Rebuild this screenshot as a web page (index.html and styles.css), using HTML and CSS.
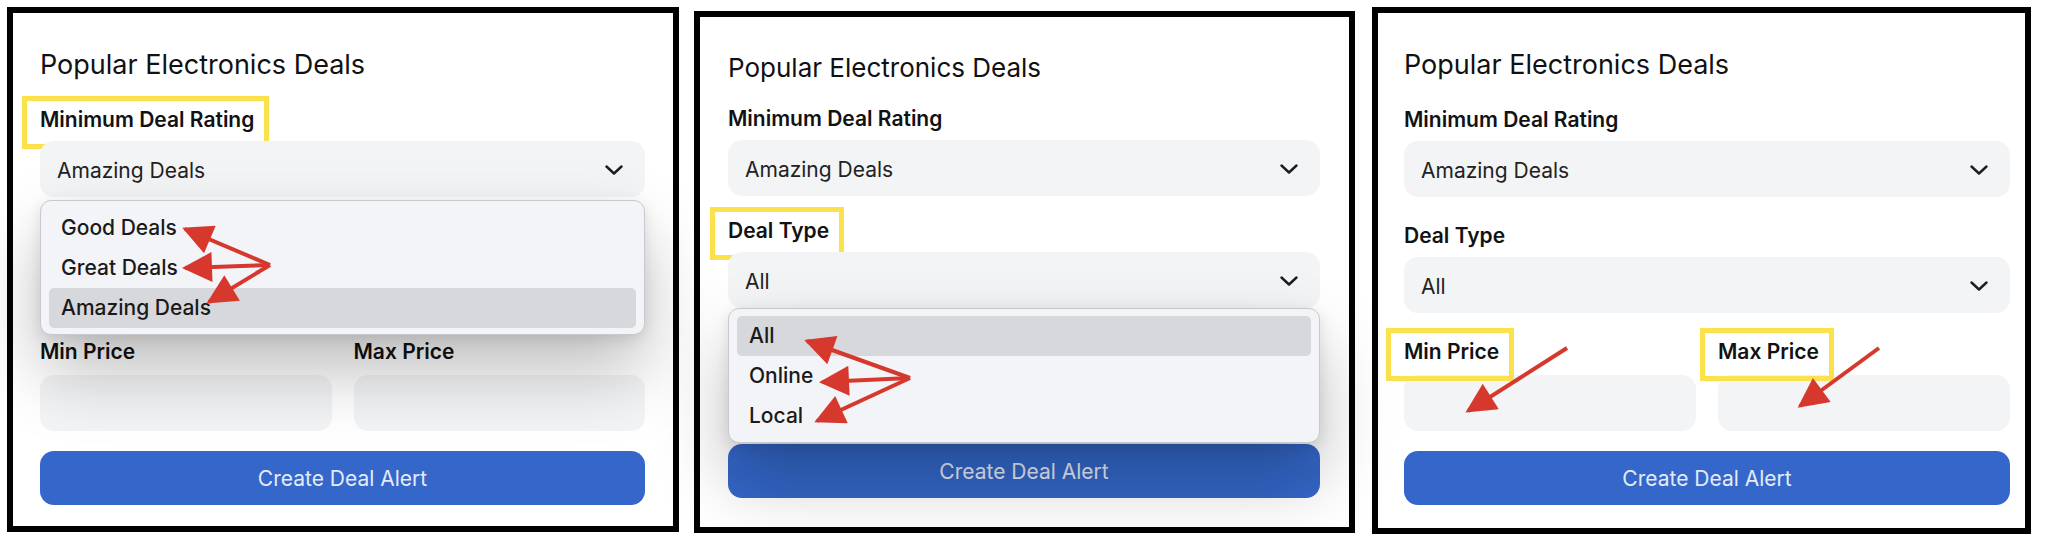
FILE: index.html
```html
<!DOCTYPE html>
<html lang="en">
<head>
  <meta charset="UTF-8">
  <meta name="viewport" content="width=device-width, initial-scale=1.0">
  <title>Deal Alert Filters</title>
  <link rel="stylesheet" href="styles.css">
</head>
<body>
  <svg class="defs" width="0" height="0">
    <defs>
      <marker id="arrowHead" viewBox="0 0 10 10" refX="9" refY="5" markerWidth="32" markerHeight="30" markerUnits="userSpaceOnUse" orient="auto">
        <path d="M0,0 L10,5 L0,10 z" fill="#d6382d"/>
      </marker>
    </defs>
  </svg>

  <div class="board">
    <!-- Step 1: rating dropdown open -->
    <section class="panel panel-one">
      <h2 class="title">Popular Electronics Deals</h2>
      <div class="field">
        <label class="label"><span class="mark">Minimum Deal Rating</span></label>
        <div class="dropdown">
          <div class="select">
            <span>Amazing Deals</span>
            <svg class="chevron" viewBox="0 0 18 10"><path d="M1.5 1.5 L9 8.5 L16.5 1.5"/></svg>
          </div>
          <ul class="menu menu-low">
            <li>Good Deals</li>
            <li>Great Deals</li>
            <li class="active">Amazing Deals</li>
          </ul>
        </div>
      </div>
      <div class="field">
        <label class="label">Deal Type</label>
        <div class="select">
          <span>All</span>
          <svg class="chevron" viewBox="0 0 18 10"><path d="M1.5 1.5 L9 8.5 L16.5 1.5"/></svg>
        </div>
      </div>
      <div class="price-row">
        <div class="price">
          <label class="label">Min Price</label>
          <div class="input"></div>
        </div>
        <div class="price">
          <label class="label">Max Price</label>
          <div class="input"></div>
        </div>
      </div>
      <button class="submit">Create Deal Alert</button>
      <svg class="arrows">
        <line x1="257" y1="252" x2="172" y2="216"/>
        <line x1="257" y1="252" x2="172" y2="255"/>
        <line x1="257" y1="252" x2="196" y2="289"/>
      </svg>
    </section>

    <!-- Step 2: deal type dropdown open -->
    <section class="panel panel-two">
      <h2 class="title">Popular Electronics Deals</h2>
      <div class="field">
        <label class="label">Minimum Deal Rating</label>
        <div class="select">
          <span>Amazing Deals</span>
          <svg class="chevron" viewBox="0 0 18 10"><path d="M1.5 1.5 L9 8.5 L16.5 1.5"/></svg>
        </div>
      </div>
      <div class="field">
        <label class="label"><span class="mark">Deal Type</span></label>
        <div class="dropdown">
          <div class="select">
            <span>All</span>
            <svg class="chevron" viewBox="0 0 18 10"><path d="M1.5 1.5 L9 8.5 L16.5 1.5"/></svg>
          </div>
          <ul class="menu">
            <li class="active">All</li>
            <li>Online</li>
            <li>Local</li>
          </ul>
        </div>
      </div>
      <div class="price-row">
        <div class="price">
          <label class="label">Min Price</label>
          <div class="input"></div>
        </div>
        <div class="price">
          <label class="label">Max Price</label>
          <div class="input"></div>
        </div>
      </div>
      <button class="submit">Create Deal Alert</button>
      <svg class="arrows">
        <line x1="210" y1="361" x2="107" y2="324"/>
        <line x1="210" y1="361" x2="122" y2="365"/>
        <line x1="210" y1="361" x2="117" y2="404"/>
      </svg>
    </section>

    <!-- Step 3: price inputs -->
    <section class="panel panel-three">
      <h2 class="title">Popular Electronics Deals</h2>
      <div class="field">
        <label class="label">Minimum Deal Rating</label>
        <div class="select">
          <span>Amazing Deals</span>
          <svg class="chevron" viewBox="0 0 18 10"><path d="M1.5 1.5 L9 8.5 L16.5 1.5"/></svg>
        </div>
      </div>
      <div class="field">
        <label class="label">Deal Type</label>
        <div class="select">
          <span>All</span>
          <svg class="chevron" viewBox="0 0 18 10"><path d="M1.5 1.5 L9 8.5 L16.5 1.5"/></svg>
        </div>
      </div>
      <div class="price-row">
        <div class="price">
          <label class="label"><span class="mark">Min Price</span></label>
          <div class="input"></div>
        </div>
        <div class="price">
          <label class="label"><span class="mark">Max Price</span></label>
          <div class="input"></div>
        </div>
      </div>
      <button class="submit">Create Deal Alert</button>
      <svg class="arrows">
        <line x1="189" y1="335" x2="90" y2="398"/>
        <line x1="501" y1="335" x2="422" y2="393"/>
      </svg>
    </section>
  </div>
</body>
</html>
```

FILE: styles.css
```css
/* Page */
body {
  margin: 0;
  background-color: #fff;
  font-family: Inter, "Noto Sans", "Liberation Sans", sans-serif;
  color: #141414;
}

.defs {
  position: absolute;
}

.board {
  display: flex;
  align-items: flex-start;
  padding: 7px 0 0 7px;
}

/* Panels */
.panel {
  position: relative;
  box-sizing: border-box;
  display: flex;
  flex-direction: column;
  gap: 26px;
  border: 6px solid #000;
  background-color: #fff;
  padding-top: 36px;
}

.panel-one {
  width: 672px;
  height: 525px;
  padding-left: 27px;
  padding-right: 28px;
}

.panel-two {
  width: 661px;
  height: 522px;
  margin-top: 4px;
  margin-left: 15px;
  padding-top: 35px;
  padding-left: 28px;
  padding-right: 29px;
  gap: 22px;
}

.panel-three {
  width: 659px;
  height: 527px;
  margin-left: 17px;
  padding-left: 26px;
  padding-right: 15px;
}

.title {
  margin: 0;
  font-size: 27px;
  line-height: 32px;
  font-weight: 400;
  color: #111;
}

.panel-two .title {
  font-size: 26px;
}

/* Fields */
.field,
.price {
  display: flex;
  flex-direction: column;
  gap: 8px;
}

.price {
  gap: 10px;
}

.label {
  font-size: 21px;
  line-height: 26px;
  font-weight: 600;
  color: #121212;
}

.mark {
  position: relative;
}

.mark::after {
  content: "";
  position: absolute;
  top: -11px;
  right: -15px;
  bottom: -17px;
  left: -18px;
  border: 5px solid #fbe24c;
}

.dropdown {
  position: relative;
}

.select {
  box-sizing: border-box;
  height: 56px;
  display: flex;
  align-items: center;
  justify-content: space-between;
  padding: 2px 22px 0 17px;
  background-color: #f3f4f6;
  border-radius: 14px;
  font-size: 21px;
  color: #222;
}

.chevron {
  width: 18px;
  height: 10px;
  fill: none;
  stroke: #1d1d1d;
  stroke-width: 2.4;
  stroke-linecap: round;
  stroke-linejoin: round;
}

/* Open dropdown list */
.menu {
  position: absolute;
  z-index: 4;
  top: 100%;
  left: 0;
  right: 0;
  margin: 0;
  padding: 7px 8px 6px;
  list-style: none;
  background-color: #f3f4f7;
  border: 1px solid #c9c9cc;
  border-radius: 11px;
  box-shadow: 0 36px 70px rgba(0, 0, 0, 0.26), 0 4px 14px rgba(0, 0, 0, 0.1);
}

.menu-low {
  top: calc(100% + 3px);
}

.menu li {
  height: 40px;
  line-height: 40px;
  padding-left: 12px;
  border-radius: 5px;
  font-size: 21px;
  font-weight: 500;
  color: #1a1a1a;
}

.menu li.active {
  background-color: #d7d8dc;
}

/* Price inputs */
.price-row {
  display: grid;
  grid-template-columns: 1fr 1fr;
  gap: 22px;
}

.input {
  height: 56px;
  background-color: #f3f4f6;
  border-radius: 14px;
}

.submit {
  height: 54px;
  margin-top: -6px;
  border: none;
  border-radius: 14px;
  background-color: #3467c9;
  color: #e4ebf8;
  font-family: inherit;
  font-size: 21px;
  cursor: pointer;
}

.panel-two .submit {
  margin-top: 0;
}

/* Red annotation arrows */
.arrows {
  position: absolute;
  z-index: 6;
  top: 0;
  left: 0;
  width: 100%;
  height: 100%;
  overflow: visible;
  pointer-events: none;
}

.arrows line {
  stroke: #d6382d;
  stroke-width: 4;
  marker-end: url(#arrowHead);
}
```
